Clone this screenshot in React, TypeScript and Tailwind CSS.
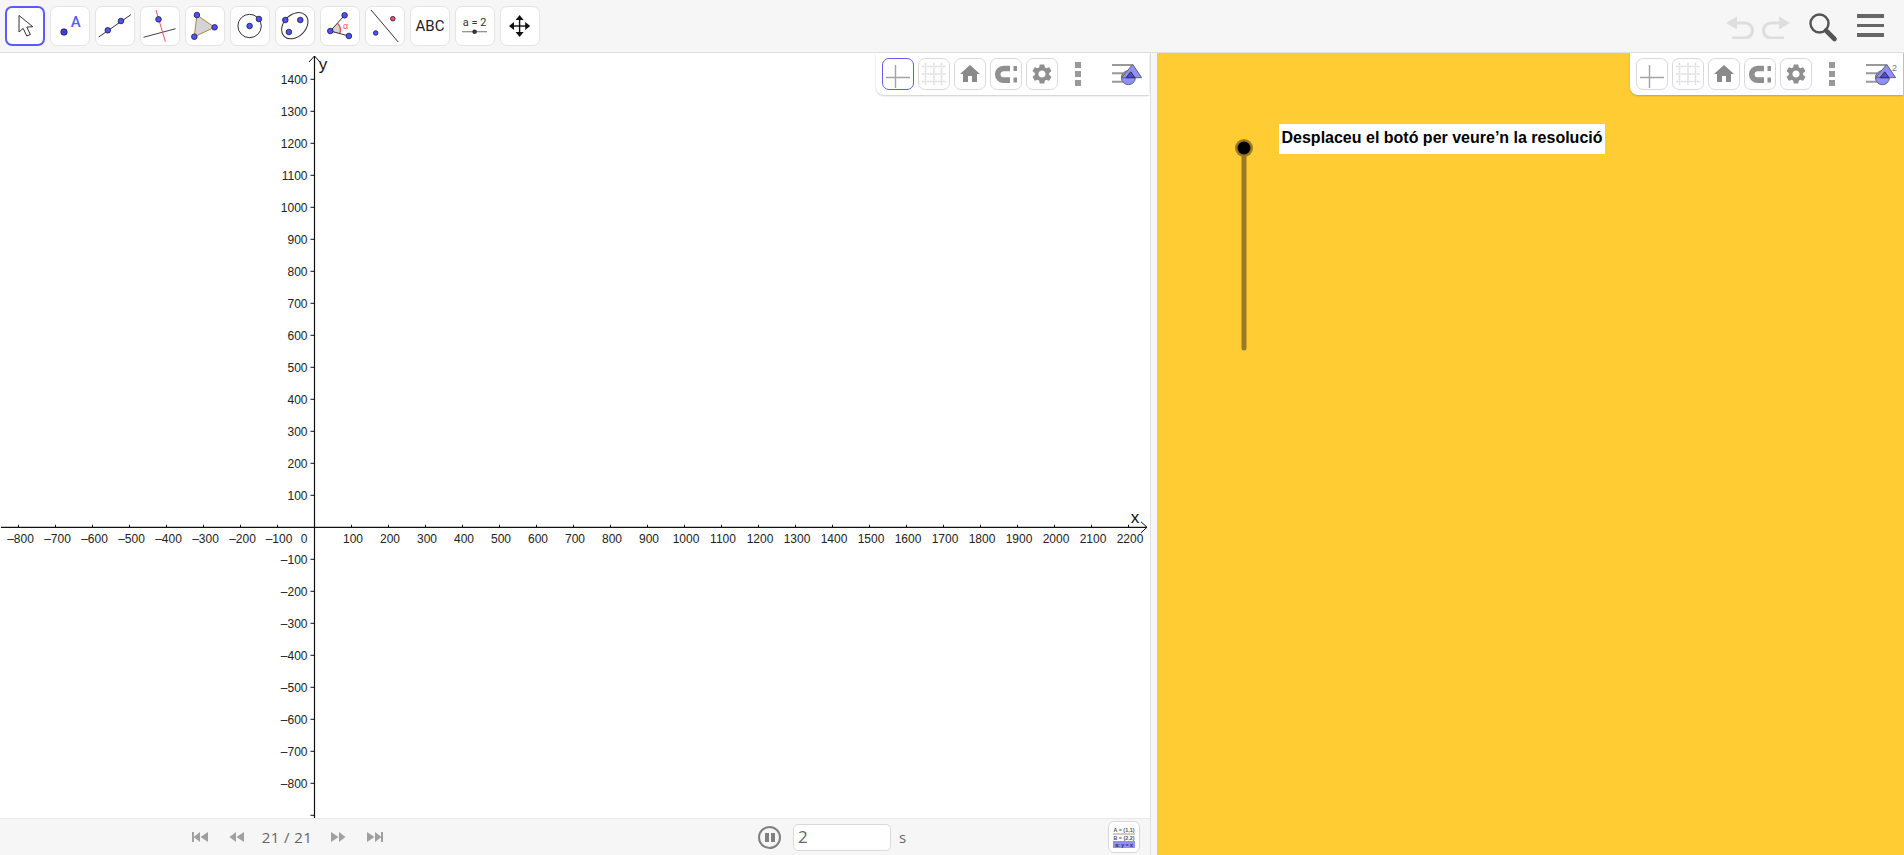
import React from "react";
import { MdHome, MdSettings } from "react-icons/md";

const P = ({ x, y, c = "#5050ff", r = 2.8 }: { x: number; y: number; c?: string; r?: number }) => (
  <circle cx={x} cy={y} r={r} fill={c} stroke="#1a1a3a" strokeWidth={0.8} />
);

const toolIcons: React.ReactNode[] = [
  <path key="a" d="M14 9.5V26l4.2-3.6 3.6 7.6 3.6-1.5-3.6-7.4 6-.4Z" fill="#fff" stroke="#333" strokeWidth={1} strokeLinejoin="round" />,
  <g key="b">
    <P x={14} y={26} r={3.2} c="#3f3fd8" />
    <text x={25.7} y={20.5} textAnchor="middle" fontSize={15} fill="#5a5aff" fontFamily="Roboto, sans-serif" fontWeight={500}>A</text>
  </g>,
  <g key="c">
    <line x1={3.7} y1={31} x2={35.9} y2={8.7} stroke="#333" strokeWidth={1} />
    <P x={12.8} y={24.3} />
    <P x={26} y={15} />
  </g>,
  <g key="d">
    <line x1={3.5} y1={31.3} x2={35.6} y2={22.7} stroke="#444" strokeWidth={1} />
    <line x1={16} y1={4} x2={25.4} y2={35.7} stroke="#ee5566" strokeWidth={1} />
    <P x={18.5} y={13.3} />
  </g>,
  <g key="e">
    <polygon points="11.9,9 29.6,21.3 9.3,30.7" fill="#d4d4d4" stroke="#a88a3a" strokeWidth={1} />
    <P x={11.9} y={9} />
    <P x={29.6} y={21.3} />
    <P x={9.3} y={30.7} />
  </g>,
  <g key="f">
    <circle cx={19.6} cy={20} r={11.7} fill="none" stroke="#333" strokeWidth={1} />
    <P x={19.6} y={20} />
    <P x={28.9} y={13} />
  </g>,
  <g key="g">
    <ellipse cx={19.8} cy={19.7} rx={15} ry={11} transform="rotate(-45 19.8 19.7)" fill="none" stroke="#333" strokeWidth={1} />
    <P x={10.3} y={14} />
    <P x={25.3} y={14} />
    <P x={13.9} y={26} />
  </g>,
  <g key="h">
    <path d="M10.3 25 L17.4 17.2 A9.5 9.5 0 0 1 19.7 27.8 Z" fill="#d4d4d4" />
    <path d="M17.4 17.2 A9.5 9.5 0 0 1 19.7 27.8" fill="none" stroke="#f05060" strokeWidth={1.4} />
    <line x1={10.3} y1={25} x2={24.6} y2={9.3} stroke="#333" strokeWidth={1} />
    <line x1={10.3} y1={25} x2={28.9} y2={30} stroke="#333" strokeWidth={1} />
    <text x={25.6} y={23} textAnchor="middle" fontSize={9} fill="#f05060" fontFamily="'Liberation Sans', sans-serif">α</text>
    <P x={10.3} y={25} />
    <P x={24.6} y={9.3} />
    <P x={28.9} y={30} />
  </g>,
  <g key="i">
    <line x1={6.1} y1={4} x2={33.2} y2={36} stroke="#333" strokeWidth={1} />
    <P x={27.8} y={12.7} c="#f05060" r={2.3} />
    <P x={10.7} y={27} r={2.3} />
  </g>,
  <text key="j" x={20} y={25.2} textAnchor="middle" fontSize={15} fill="#222" fontFamily="Roboto, sans-serif">ABC</text>,
  <g key="k">
    <text x={19.6} y={19.5} textAnchor="middle" fontSize={11} fill="#333" fontFamily="Roboto, sans-serif">a = 2</text>
    <line x1={7} y1={25.7} x2={32} y2={25.7} stroke="#888" strokeWidth={1.2} />
    <circle cx={19.6} cy={25.7} r={2.3} fill="#333" />
  </g>,
  <g key="l" fill="#111">
    <rect x={18.9} y={12} width={1.4} height={16} />
    <rect x={11} y={19.3} width={17} height={1.4} />
    <polygon points="19.6,9 15.6,14 23.6,14" />
    <polygon points="19.6,31 15.6,26 23.6,26" />
    <polygon points="9,20 14,16 14,24" />
    <polygon points="30.2,20 25.2,16 25.2,24" />
  </g>,
];

const StyleBtn = ({ active, children }: { active?: boolean; children: React.ReactNode }) => (
  <div className={`flex h-8 w-8 shrink-0 items-center justify-center rounded-[7px] border bg-white ${active ? "border-[#5f5fe8]" : "border-[#d9d9d9]"}`}>
    {children}
  </div>
);

function StyleBar({ active, second, right }: { active?: boolean; second?: boolean; right: string }) {
  return (
    <div className={`absolute top-0 flex h-[42px] w-[273px] items-start gap-1 rounded-bl-lg bg-white pl-[6px] pt-[5px] shadow-[0_1px_2px_rgba(0,0,0,0.2)] ${right}`}>
      <StyleBtn active={active}>
        <svg width={30} height={30} viewBox="0 0 30 30">
          <path d="M3 18.5H27M12.5 6V29" stroke="#a3a3a3" strokeWidth={1.4} fill="none" />
        </svg>
      </StyleBtn>
      <StyleBtn>
        <svg width={30} height={30} viewBox="0 0 30 30">
          <path d="M3 7.5H27M3 15H27M3 22.5H27M6.5 4V26M15 4V26M22.5 4V26" stroke="#dcdcdc" strokeWidth={1.6} strokeDasharray="2 0.6" fill="none" />
        </svg>
      </StyleBtn>
      <StyleBtn>
        <MdHome size={24} color="#8a8a8a" />
      </StyleBtn>
      <StyleBtn>
        <svg width={30} height={30} viewBox="0 0 30 30">
          <path d="M19 9.5H12.5a5.8 5.8 0 0 0 0 11.6H19" stroke="#909090" strokeWidth={5.6} fill="none" />
          <rect x={22.5} y={7} width={3.5} height={5} fill="#909090" />
          <rect x={22.5} y={18.5} width={3.5} height={5} fill="#909090" />
        </svg>
      </StyleBtn>
      <StyleBtn>
        <MdSettings size={24} color="#8f8f8f" />
      </StyleBtn>
      <div className="ml-[13px] mt-[4px] flex w-[6px] shrink-0 flex-col gap-[3px]">
        <div className="h-[6px] w-[6px] bg-[#999999]" />
        <div className="h-[6px] w-[6px] bg-[#999999]" />
        <div className="h-[6px] w-[6px] bg-[#999999]" />
      </div>
      <svg className="ml-[27px] mt-[4px] shrink-0" width={38} height={28} viewBox="0 0 38 28">
        <path d="M0 3H20M0 11.3H11M0 19.7H11" stroke="#999" strokeWidth={2} fill="none" />
        <circle cx={16.4} cy={15.7} r={7} fill="#8f8fff" stroke="#666" strokeWidth={1} />
        <polygon points="20.7,2.3 29.7,15.7 9.7,15.7" fill="#8f8fff" stroke="#666" strokeWidth={1} />
        <path d="M18.7 9.8 L23 15.7 H14Z" fill="#4a4aee" stroke="#333" strokeWidth={1} />
        {second && <text x={26} y={9} fontSize={9} fill="#777" fontFamily="'Liberation Sans', sans-serif">2</text>}
      </svg>
    </div>
  );
}

const X0 = 314.5;
const Y0 = 474.3;
const labelFont = "'Liberation Sans', Arial, sans-serif";

function Graph() {
  const xs: number[] = [];
  for (let v = -800; v <= 2200; v += 100) xs.push(v);
  const ys: number[] = [];
  for (let v = -900; v <= 1400; v += 100) ys.push(v);
  const fmt = (v: number) => (v < 0 ? "\u2013" + Math.abs(v) : String(v));
  return (
    <svg width={1150} height={765} viewBox="0 0 1150 765" className="block" fontFamily={labelFont}>
      <line x1={1} y1={Y0} x2={1147} y2={Y0} stroke="#111" strokeWidth={1.2} />
      <path d={`M1141 ${Y0 - 5.5}L1147 ${Y0}L1141 ${Y0 + 5.5}`} stroke="#111" strokeWidth={1} fill="none" />
      <line x1={X0} y1={3} x2={X0} y2={765} stroke="#111" strokeWidth={1.2} />
      <path d={`M${X0 - 5.5} 9L${X0} 3L${X0 + 5.5} 9`} stroke="#111" strokeWidth={1} fill="none" />
      {xs.filter((v) => v !== 0).map((v) => {
        const x = X0 + (v * 37) / 100;
        return (
          <g key={v}>
            <line x1={x} y1={Y0 - 2.5} x2={x} y2={Y0} stroke="#111" strokeWidth={1} />
            <text x={v === -100 ? x + 1.5 : x + (v < 0 ? 2 : 1.5)} y={Y0 + 16} textAnchor="middle" fontSize={12} fill="#222">{fmt(v)}</text>
          </g>
        );
      })}
      <text x={304} y={Y0 + 16} textAnchor="middle" fontSize={12} fill="#222">0</text>
      {ys.filter((v) => v !== 0).map((v) => {
        const y = Y0 - (v * 32) / 100;
        return (
          <g key={v}>
            <line x1={X0 - 4} y1={y} x2={X0} y2={y} stroke="#111" strokeWidth={1} />
            {v !== -900 && <text x={307.5} y={y + 4.2} textAnchor="end" fontSize={12} fill="#222">{fmt(v)}</text>}
          </g>
        );
      })}
      <text x={1135} y={470} textAnchor="middle" fontSize={17} fill="#111">x</text>
      <text x={323} y={17} textAnchor="middle" fontSize={17} fill="#111">y</text>
    </svg>
  );
}

const NavIcon = ({ flip, bar }: { flip?: boolean; bar?: boolean }) => (
  <svg width={18} height={12} viewBox="0 0 18 12" className={flip ? "-scale-x-100" : ""}>
    {bar && <rect x={1} y={1} width={2} height={10} fill="#a0a0a0" />}
    <polygon points="9,1 9,11 2.5,6" fill="#a0a0a0" />
    <polygon points="17,1 17,11 9.5,6" fill="#a0a0a0" />
  </svg>
);

export default function App() {
  return (
    <div className="flex h-[855px] w-[1904px] flex-col overflow-hidden bg-white font-['Liberation_Sans',Arial,sans-serif]">
      <header className="flex h-[53px] shrink-0 items-start border-b border-[#e0e0e0] bg-[#f6f6f6] pl-[5px] pt-[6px]">
        <div className="flex gap-[5px]">
          {toolIcons.map((icon, i) => (
            <div key={i} className={`h-10 w-10 rounded-[7px] bg-white ${i === 0 ? "border-2 border-[#5a5aff]" : "border border-[#e4e4e4]"}`}>
              <svg width={40} height={40} viewBox="0 0 40 40" className={i === 0 ? "-m-[2px]" : "-m-px"}>
                {icon}
              </svg>
            </div>
          ))}
        </div>
        <div className="ml-auto flex items-start pr-5 pt-[7px]">
          <svg width={28} height={24} viewBox="0 0 28 24" className="mt-[2px]">
            <path d="M11 1.5 0 8l11 6.5Z" fill="#dedede" />
            <path d="M6 8H19a7.5 7.5 0 0 1 0 15H6" stroke="#dedede" strokeWidth={3.2} fill="none" />
          </svg>
          <svg width={28} height={24} viewBox="0 0 28 24" className="ml-2 mt-[2px] -scale-x-100">
            <path d="M11 1.5 0 8l11 6.5Z" fill="#dedede" />
            <path d="M6 8H19a7.5 7.5 0 0 1 0 15H6" stroke="#dedede" strokeWidth={3.2} fill="none" />
          </svg>
          <svg width={30} height={30} viewBox="0 0 30 30" className="ml-[18px]">
            <circle cx={11.5} cy={10.5} r={9} stroke="#555" strokeWidth={2.4} fill="none" />
            <path d="M18 17.5 26.5 26" stroke="#555" strokeWidth={4.6} strokeLinecap="round" />
          </svg>
          <div className="ml-[19px] mt-px flex w-[27px] flex-col gap-[6px]">
            <div className="h-[3.5px] bg-[#666666]" />
            <div className="h-[3.5px] bg-[#666666]" />
            <div className="h-[3.5px] bg-[#666666]" />
          </div>
        </div>
      </header>
      <div className="flex min-h-0 flex-1">
        <section className="flex w-[1150px] shrink-0 flex-col">
          <div className="relative flex-1">
            <Graph />
            <StyleBar active right="right-px" />
          </div>
          <footer className="flex h-[37px] shrink-0 items-center border-t border-[#e8e8e8] bg-[#f6f6f6] text-[#666666]">
            <div className="ml-[191px] flex items-center">
              <NavIcon bar />
              <div className="ml-[18px]"><NavIcon /></div>
              <span className="ml-[16px] w-[52px] text-center font-['Open_Sans',sans-serif] text-[15px] tracking-[0.4px]">21 / 21</span>
              <div className="ml-[17px]"><NavIcon flip /></div>
              <div className="ml-[18px]"><NavIcon flip bar /></div>
            </div>
            <div className="ml-[374px] flex h-[23px] w-[23px] items-center justify-center gap-[2px] rounded-full border-2 border-[#808080]">
              <div className="h-[9px] w-[4px] bg-[#808080]" />
              <div className="h-[9px] w-[4px] bg-[#808080]" />
            </div>
            <div className="ml-[12px] flex h-[27px] w-[98px] items-center rounded-[5px] border border-[#d9d9d9] bg-white pl-[4px] font-['Open_Sans',sans-serif] text-[17px]">2</div>
            <span className="ml-[8px] font-['Open_Sans',sans-serif] text-[15px]">s</span>
            <div className="ml-[202px] flex h-8 w-8 items-center justify-center rounded-[6px] border border-[#d9d9d9] bg-white">
              <svg width={24} height={24} viewBox="0 0 24 24" fontFamily={labelFont}>
                <text x={12} y={7} textAnchor="middle" fontSize={5.4} fontWeight={700} fill="#555">A = (1,1)</text>
                <line x1={1} y1={9} x2={23} y2={9} stroke="#555" strokeWidth={0.6} />
                <text x={12} y={15} textAnchor="middle" fontSize={5.4} fontWeight={700} fill="#555">B = (2,2)</text>
                <line x1={1} y1={16.5} x2={23} y2={16.5} stroke="#555" strokeWidth={0.6} />
                <rect x={1} y={17} width={22} height={6} fill="#8f8fff" />
                <text x={12} y={22} textAnchor="middle" fontSize={5.2} fontWeight={700} fill="#333">a: y = x</text>
              </svg>
            </div>
          </footer>
        </section>
        <div className="w-[7px] shrink-0 border-l border-[#e0e0e0] bg-[#f6f6f6]" />
        <section className="relative flex-1 bg-[#ffcc33]">
          <svg className="absolute left-[77px] top-[83px]" width={20} height={225} viewBox="0 0 20 225">
            <line x1={10} y1={12} x2={10} y2={212} stroke="#9c7a24" strokeWidth={5} strokeLinecap="round" />
            <circle cx={10} cy={12} r={9} fill="#9c7a24" />
            <circle cx={10} cy={12} r={6.5} fill="#000" />
          </svg>
          <div className="absolute left-[122px] top-[71px] flex h-[30px] w-[326px] items-center justify-center whitespace-nowrap bg-white pb-[2px] text-[16px] font-bold text-black">
            Desplaceu el botó per veure’n la resolució
          </div>
          <StyleBar second right="right-px" />
        </section>
      </div>
    </div>
  );
}
